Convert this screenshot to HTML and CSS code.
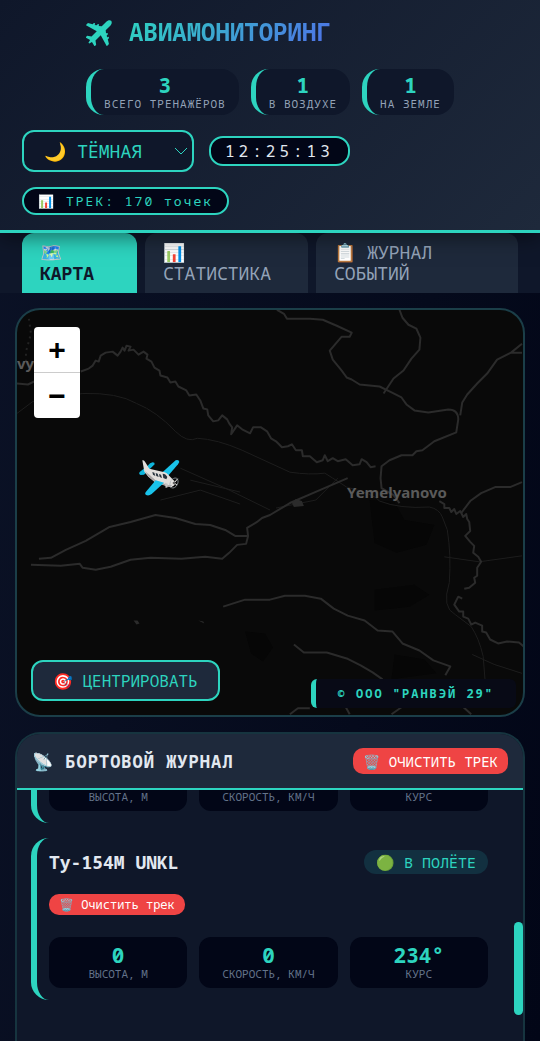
FILE: index.html
```
<!DOCTYPE html>
<html lang="ru">
<head>
    <meta charset="UTF-8">
    <meta name="viewport" content="width=device-width, initial-scale=1.0">
    <title>Авиамониторинг</title>
    <link rel="stylesheet" href="styles.css">
</head>
<body>
    <header class="header">
        <div class="brand">
            <div class="logo">
                <svg class="logo-icon" viewBox="0 0 32 32" aria-hidden="true">
                    <g transform="rotate(-45 16 16)">
                        <path d="M34 16c0-2-2.500-3.200-5-3.200h-7L19.600 9.800h.9c.8 0 .8-2 0-2h-1.800L17.300 5.800h.9c.8 0 .8-2 0-2h-1.800L13.500-1H10l4 13.800H5.500L2.500 8.700H0L1.500 14.500-2 15.300v1.400L1.500 17.500 0 23.300h2.500l3-4.100H14L10 33h3.500l2.900-4.800h1.800c.8 0 .8-2 0-2h-.9l1.400-2h1.800c.8 0 .8-2 0-2h-.9l2.400-3H29c2.500 0 5-1.200 5-3.200z"/>
                    </g>
                </svg>
                <h1>АВИАМОНИТОРИНГ</h1>
            </div>
            <div class="stats">
                <div class="stat"><b>3</b><span>ВСЕГО ТРЕНАЖЁРОВ</span></div>
                <div class="stat"><b>1</b><span>В ВОЗДУХЕ</span></div>
                <div class="stat"><b>1</b><span>НА ЗЕМЛЕ</span></div>
            </div>
        </div>
        <div class="controls">
            <div class="theme">
                <select id="theme" aria-label="Тема">
                    <option selected>🌙 ТЁМНАЯ</option>
                    <option>☀️ СВЕТЛАЯ</option>
                </select>
                <svg class="chevron" viewBox="0 0 14 8"><path d="M1 1l6 6 6-6"/></svg>
            </div>
            <div class="clock">12:25:13</div>
            <div class="track-info">📊 ТРЕК: 170 точек</div>
        </div>
    </header>

    <nav class="tabs">
        <button class="tab active">🗺️ КАРТА</button>
        <button class="tab">📊 СТАТИСТИКА</button>
        <button class="tab">📋 ЖУРНАЛ СОБЫТИЙ</button>
    </nav>

    <main>
        <section class="map">
            <svg class="map-lines" viewBox="16 309 508 407" preserveAspectRatio="xMidYMid slice" aria-hidden="true">
                <g class="land">
                    <path d="M370 500l25 2 10 18 30 5-8 20-30 8-22-10zM375 590l40-5 15 10-20 12-35 4zM395 655l30 5 12 14-45 6zM245 632l20 2 8 14-10 14-12-8z"/>
                </g>
                <g class="road">
                    <path d="M16 413l16-12 50-8q35-1 54 10 20 8 39 28 12 12 22 7 20 1 45 12l48 22q20 3 35 1l8 5 14 9q28 7 33 14 20 8 50 6 10 2 13 10l5 13q4 25 2 53-8 25 6 32l16 12q8 12 12 30l2 25"/>
                    <path d="M180 468l45 20 45 22M445 557l35 5 43-6M473 655l22 10 28 9M160 500l40-10 40 14M190 480l50 12M276 508l40-8 22-22"/>
                </g>
                <g class="river">
                    <path d="M16 383l11 1 8-4"/>
                    <path d="M80 371l8-3 4-3 3-5 3 1 2-6 5-3 7-1 5 4 3-4 2-4 2 3 2-5 4 1-2 4 5-1 5 5 5-3 4 3-1 4 5 3 3 6 5 3 1 5 7 2 3 5 5-1 3 5 8 4 3 5 7-1 4 6 3 8 4 1 1 6 5 6 5-1 4-5 5 4 2 4 3 4-1 7 4-6 2-3 5 4 8 4 3-6 8 0 6 4 4 7 5 3 6 6 6-1 4-2 4 6 6 0 1 6 7 0 7 6 6-2 2-5 3 6 5-3 5 3 8-2 7 6 7-1 2-5 5 3 4 5 5-1"/>
                    <path d="M277 309l7 4 3 5 23 0 13 1 14 6 15 7-2 4-8 0-12 14 3 9 9 11 5 7 5 2 8 5 20 2 12 6 10 5 5 7 8 6 14 2 20-3q10 0 10 10l-2 13-22 9-12 9-6 1-4 4-11 0-12 5-8 6-1 12 1 10 12 7 6 8"/>
                    <path d="M400 309l3 8 6 7 8 4 4 9-1 12-8 9-8 12-10 8-10 15M523 343l-11 9-14 7-10 14-10 10-10 11-5 8-2 13M512 352h11M523 482l-12 5-15 0-14 6-11 8-9 12"/>
                    <path d="M440 501l5 3 0 4 5 0 2 4 3-3 2 5 4-3 3 6 3-3 1 5 2 3 1 9-5 5 5 6 4 4-1 7 5 4 3 5-4 6 0 8-3 2 1 5-6 5-5 1"/>
                    <path d="M463 599l-4-2-2 4-2 4 5 7 4 0 0 5 5 2 3 6 4-2 7 3 0 6 4 1 4 7 8 4 9-2 12 1 7 6"/>
                    <path d="M348 478l-28 12-30 13-20 12-8 3-5 4-10 6 1 8-2 8-9 1-8 8-7 6-17-2-24 2-31-1-20 2-20 7-15 3-13-2-3-4-19 2-30-1"/>
                    <path d="M38 559l12-1 15-8 20-9 24-14 21-5 25-7 20 3 20 6 15 1 15 5 10 6 13 0"/>
                    <path d="M223 607l22-7 25 0 15-4 20 0 16 3 13 10 14 7 17 5 13 10 15 1 10 12 17 7 14 10 17 6-5 9M294 645l10 8 23 0 20 6 14 7 12 7 10 7M290 715l8-6 12 0M345 706l5 9M392 715l10-7M462 706l10 9"/>
                </g>
                <path class="dots" d="M28 318l2 15-5 18v14"/>
                <path class="spot" d="M292 503l4-4 6 2 2 5-10 1zM133 621l4 0 2 3-3 1zM198 621l5 1 1 2z"/>
            </svg>
            <span class="place place-main">Yemelyanovo</span>
            <span class="place place-left">vy</span>
            <svg class="aircraft" viewBox="24 24 126 114" aria-label="Самолёт">
                <path fill="#0fb5dc" d="M29 66q-4 6 3 9l10-1 32-31q1-6-6-6-8 1-15 10z"/>
                <path fill="#19c3ea" d="M137 31q10-3 11 5l-4 7-36 42-19-11z"/>
                <path fill="#e2dfdc" d="M37 31q5-2 8 4l13 21 39 9q15 2 22 14l14 14q5 9-3 15-9 6-17 1l-38-12-20-17-12-15z"/>
                <path fill="#aaa5a5" d="M44 63l16 13 20 18 34 11q9 2 15-2-2 9-14 7l-38-12-20-17z"/>
                <path fill="#19c3ea" d="M77 91l25 7-37 34q-9 7-17 3-5-4 0-10z"/>
                <path fill="#27323c" d="M67 66l6 2 3 10-7-4zM77 69l6 2 3 10-7-3zM87 72l6 2 3 10-7-3zM98 71q9 0 14 10l-3 7-9-4z"/>
                <path fill="#c9c5c3" d="M105 98l8 3v11l-6 2z"/>
                <ellipse cx="132" cy="99" rx="11" ry="16" fill="none" stroke="#a7b0b5" stroke-width="2" transform="rotate(28 132 99)"/>
                <path stroke="#e8e8e8" stroke-width="3" d="M122 112l21-26M123 92l18 13"/>
                <circle cx="132" cy="99" r="4" fill="#666"/>
            </svg>
            <div class="zoom">
                <button aria-label="Приблизить">+</button>
                <button aria-label="Отдалить">−</button>
            </div>
            <button class="center-btn">🎯 ЦЕНТРИРОВАТЬ</button>
            <div class="copyright">© ООО "РАНВЭЙ 29"</div>
        </section>

        <section class="panel">
            <div class="panel-head">
                <h2>📡 БОРТОВОЙ ЖУРНАЛ</h2>
                <button class="clear">🗑️ ОЧИСТИТЬ ТРЕК</button>
            </div>
            <div class="list">
                <article class="card">
                    <div class="metrics">
                        <div class="metric"><b>0</b><span>ВЫСОТА, М</span></div>
                        <div class="metric"><b>0</b><span>СКОРОСТЬ, КМ/Ч</span></div>
                        <div class="metric"><b>0°</b><span>КУРС</span></div>
                    </div>
                </article>
                <article class="card">
                    <div class="card-head">
                        <h3>Ту-154М UNKL</h3>
                        <span class="badge">🟢 В ПОЛЁТЕ</span>
                    </div>
                    <button class="clear clear-small">🗑️ Очистить трек</button>
                    <div class="metrics">
                        <div class="metric"><b>0</b><span>ВЫСОТА, М</span></div>
                        <div class="metric"><b>0</b><span>СКОРОСТЬ, КМ/Ч</span></div>
                        <div class="metric"><b>234°</b><span>КУРС</span></div>
                    </div>
                </article>
            </div>
            <div class="thumb"></div>
        </section>
    </main>
</body>
</html>
```
FILE: styles.css
```
* {
    box-sizing: border-box;
    margin: 0;
    padding: 0;
}
:root {
    --teal: #2dd4bf;
    --dark: #020617;
    --navy: #0f172a;
    --slate: #1e293b;
    --red: #ef4444;
}
body {
    height: 100vh;
    display: flex;
    flex-direction: column;
    overflow: hidden;
    background: linear-gradient(100deg, #0b1226, var(--dark));
    color: #e2e8f0;
    font-family: "Droid Sans Mono", "Noto Sans Mono", "DejaVu Sans Mono", "Noto Color Emoji", monospace;
}
button, select {
    font-family: inherit;
    cursor: pointer;
}

/* header */
.header {
    position: relative;
    z-index: 2;
    padding: 16px 22px 15px;
    background: linear-gradient(135deg, var(--navy), var(--slate));
    border-bottom: 3px solid var(--teal);
    box-shadow: 0 4px 20px rgba(0, 0, 0, 0.5);
}
.brand {
    width: fit-content;
    margin: 0 auto 15px;
}
.logo {
    display: flex;
    align-items: center;
    gap: 15px;
    height: 32px;
    margin-bottom: 21px;
}
.logo-icon {
    width: 28px;
    height: 28px;
    fill: var(--teal);
}
.logo h1 {
    font-size: 24px;
    line-height: 32px;
    background: linear-gradient(135deg, var(--teal), #4f6fe8);
    -webkit-background-clip: text;
    background-clip: text;
    color: transparent;
}
.stats {
    display: flex;
    gap: 12px;
}
.stat {
    display: flex;
    flex-direction: column;
    align-items: center;
    padding: 5px 13px;
    background: var(--navy);
    border-left: 5px solid var(--teal);
    border-radius: 18px;
}
.stat b {
    color: var(--teal);
    font-size: 21px;
    line-height: 23px;
}
.stat span {
    color: #94a3b8;
    font-size: 11px;
    line-height: 13px;
    letter-spacing: 1px;
}
.controls {
    display: flex;
    flex-wrap: wrap;
    align-items: center;
    gap: 15px;
}
.theme {
    position: relative;
}
.theme select {
    appearance: none;
    width: 172px;
    height: 42px;
    padding: 0 20px;
    background: var(--navy);
    border: 2px solid var(--teal);
    border-radius: 12px;
    color: var(--teal);
    font-size: 18px;
}
.chevron {
    position: absolute;
    right: 6px;
    top: 17px;
    width: 14px;
    height: 8px;
    fill: none;
    stroke: var(--teal);
    pointer-events: none;
}
.clock, .track-info {
    background: var(--dark);
    border: 2px solid var(--teal);
    border-radius: 14px;
    padding: 0 14px;
}
.clock {
    font-size: 16px;
    line-height: 26px;
    letter-spacing: 4px;
}
.track-info {
    color: var(--teal);
    font-size: 13px;
    line-height: 24px;
    letter-spacing: 2px;
}

/* tabs */
.tabs {
    display: grid;
    grid-template-columns: 115fr 163fr 202fr;
    gap: 8px;
    padding: 0 22px;
    background: var(--navy);
}
.tab {
    height: 60px;
    padding: 0 18px;
    background: var(--slate);
    border: none;
    border-radius: 12px 12px 0 0;
    color: #94a3b8;
    font-size: 18px;
    line-height: 21px;
    text-align: left;
}
.tab.active {
    background: var(--teal);
    color: var(--navy);
    font-weight: bold;
}

main {
    flex: 1;
    min-height: 0;
    display: flex;
    flex-direction: column;
    gap: 15px;
    padding: 15px 15px 0;
}

/* map */
.map {
    position: relative;
    flex: none;
    height: 409px;
    overflow: hidden;
    background: #090909;
    border: 2px solid #1b3e48;
    border-radius: 25px;
}
.map-lines {
    display: block;
    width: 100%;
    height: 100%;
    fill: none;
    stroke-linejoin: round;
}
.river {
    stroke: #2b2b2b;
    stroke-width: 2;
}
.road {
    stroke: #1d1d1d;
    stroke-width: 1;
}
.dots {
    stroke: #222;
    stroke-width: 2;
    stroke-dasharray: 2 4;
}
.land {
    fill: #060606;
}
.spot {
    fill: #2b2b2b;
}
.place {
    position: absolute;
    color: #5a5a5a;
    font: bold 15px/20px "Noto Sans", sans-serif;
}
.place-main {
    left: 330px;
    top: 172px;
}
.place-left {
    left: 0;
    top: 43px;
}
.aircraft {
    position: absolute;
    left: 121px;
    top: 148px;
    width: 42px;
    height: 38px;
}
.zoom {
    position: absolute;
    left: 17px;
    top: 17px;
    width: 46px;
    border-radius: 4px;
    overflow: hidden;
}
.zoom button {
    display: block;
    width: 100%;
    height: 45px;
    background: #fff;
    border: none;
    color: #000;
    font: bold 30px/43px "Liberation Sans", sans-serif;
}
.zoom button + button {
    height: 46px;
    border-top: 1px solid #ccc;
}
.center-btn {
    position: absolute;
    left: 14px;
    bottom: 14px;
    height: 41px;
    padding: 0 20px;
    background: var(--slate);
    border: 2px solid var(--teal);
    border-radius: 12px;
    color: var(--teal);
    font-size: 16px;
}
.copyright {
    position: absolute;
    right: 7px;
    bottom: 7px;
    padding: 0 22px;
    background: #080a16;
    border-left: 5px solid var(--teal);
    border-radius: 6px;
    color: var(--teal);
    font-size: 12px;
    font-weight: bold;
    line-height: 29px;
    letter-spacing: 2px;
}

/* flight log */
.panel {
    position: relative;
    flex: 1;
    min-height: 0;
    display: flex;
    flex-direction: column;
    overflow: hidden;
    background: #0f1729;
    border: 2px solid #16343f;
    border-bottom: none;
    border-radius: 25px 25px 0 0;
}
.panel-head {
    display: flex;
    align-items: center;
    justify-content: space-between;
    height: 56px;
    padding: 0 15px;
    background: var(--slate);
    border-bottom: 2px solid var(--teal);
}
.panel-head h2 {
    font-size: 17px;
    letter-spacing: 1px;
}
.clear {
    height: 26px;
    padding: 0 10px;
    background: var(--red);
    border: none;
    border-radius: 10px;
    color: #fff;
    font-size: 14px;
}
.clear-small {
    height: 21px;
    font-size: 12px;
}
.list {
    flex: 1;
    min-height: 0;
    display: flex;
    flex-direction: column;
    justify-content: flex-end;
    gap: 15px;
    overflow: hidden;
    padding: 0 23px 41px 14px;
}
.card {
    flex: none;
    padding: 12px;
    border-left: 6px solid var(--teal);
    border-radius: 18px;
}
.card-head {
    display: flex;
    align-items: center;
    justify-content: space-between;
    margin-bottom: 20px;
}
.card-head h3 {
    font-size: 18px;
    line-height: 22px;
}
.badge {
    padding: 0 12px;
    background: #123040;
    border-radius: 12px;
    color: var(--teal);
    font-size: 15px;
    line-height: 24px;
}
.card-head + .clear {
    display: block;
    margin-bottom: 22px;
}
.metrics {
    display: grid;
    grid-template-columns: repeat(3, 1fr);
    gap: 12px;
}
.metric {
    display: flex;
    flex-direction: column;
    align-items: center;
    height: 51px;
    padding-top: 7px;
    background: var(--dark);
    border-radius: 12px;
}
.metric b {
    color: var(--teal);
    font-size: 21px;
    line-height: 23px;
}
.metric span {
    color: #64748b;
    font-size: 11px;
    line-height: 13px;
}
.thumb {
    position: absolute;
    right: 0;
    bottom: 26px;
    width: 9px;
    height: 93px;
    background: var(--teal);
    border-radius: 5px;
}
```
